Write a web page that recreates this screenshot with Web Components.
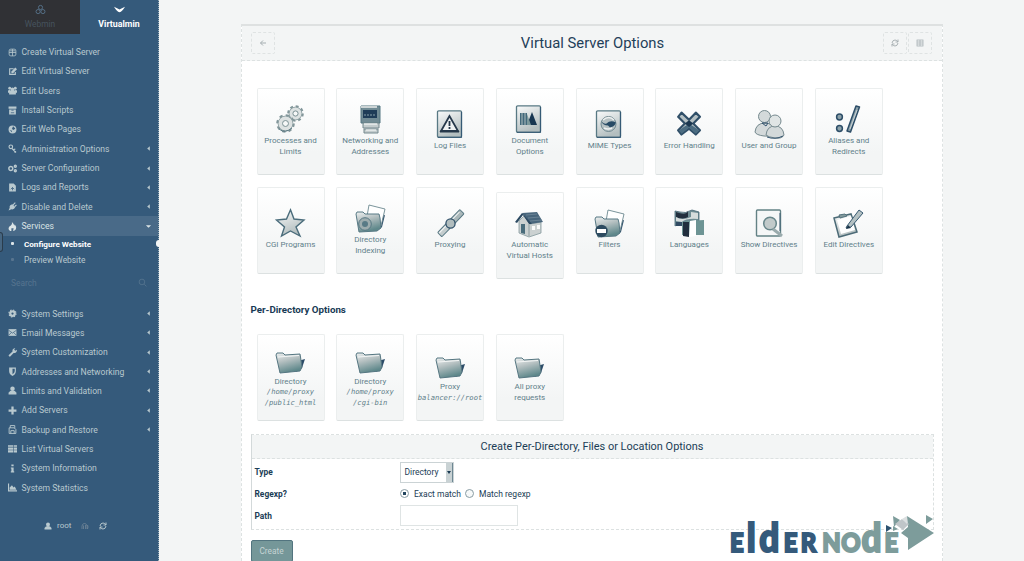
<!DOCTYPE html>
<html lang="en"><head><meta charset="utf-8"><title>Virtual Server Options</title>
<style>html,body{margin:0;height:561px;overflow:hidden;background:#f3f5f5;font-family:Roboto,"Liberation Sans",sans-serif}</style></head>
<body><vm-app></vm-app>
<script>
const glyphs={
webmin:'<g fill="none" stroke="#58748c" stroke-width="1.3"><circle cx="8" cy="5" r="3"/><circle cx="4.5" cy="11" r="3"/><circle cx="11.5" cy="11" r="3"/></g>',
chev:'<path d="M0 4Q5 6 8 8Q11 6 16 4Q12 11 8 12Q4 11 0 4Z"/>',
globe:'<g fill="none" stroke="currentColor" stroke-width="1.4"><rect x="2" y="2" width="12" height="12" rx="3"/><path d="M8 2v12M2 8h12M3 5h10"/></g>',
edit:'<path d="M10 3H3v10h10V9" fill="none" stroke="currentColor" stroke-width="2"/><path d="M6 8l7-7 3 3-7 7H6z"/>',
users:'<circle cx="8" cy="6" r="3.4"/><circle cx="3" cy="4" r="2.5"/><circle cx="13" cy="4" r="2.5"/><path d="M0 12V8q3-2 5 0 3 2 6 0 3-2 5 0v4h-2v3H2v-3z"/>',
box:'<path d="M1 1h14v4H1zM2 6h12v9H2z"/><path d="M6 7.5h4M5 12h6" stroke="#355a7b" stroke-width="1.3"/>',
earth:'<circle cx="8" cy="8" r="7"/><path d="M9 2l4 4-3 3-3-2zM3 9l4 1v3z" fill="#355a7b"/>',
key:'<g fill="none" stroke="currentColor" stroke-width="2"><circle cx="5" cy="5" r="3.2"/><path d="M7 8l6 6M10 10l3-1"/></g><circle cx="13" cy="14" r="1.7"/>',
cogs:'<g fill="none" stroke="currentColor" stroke-width="2.6"><circle cx="5" cy="8" r="3.5"/><circle cx="13" cy="4" r="1.7"/><circle cx="13" cy="12" r="1.7"/></g>',
doc:'<path d="M2 1h8l4 4v10H2z"/><path d="M5 11l3-3 3 3M8 8v5" fill="none" stroke="#355a7b" stroke-width="1.4"/>',
plug:'<path d="M1 15l2-5q-1-5 5-6l5 5q-2 5-7 4z"/><path d="M9 5l4-4M12 8l3-3" stroke="currentColor" stroke-width="2"/>',
fire:'<path d="M7 0q4 4 4 6 1 0 1-2 4 5 2 9-2 3-5 3l1-5H6v5Q1 16 1 11q0-3 4-5 3-2 2-6z"/>',
gear:'<g fill="none" stroke="currentColor"><circle cx="8" cy="8" r="4" stroke-width="4"/><circle cx="8" cy="8" r="6.3" stroke-width="2" stroke-dasharray="2.5 2.45"/></g>',
mail:'<rect y="2" x="1" width="14" height="12"/><path d="M1 4l7 5 7-5M1 13l5-5m9 5l-5-5" fill="none" stroke="#355a7b" stroke-width="1.2"/>',
wrench:'<path d="M2 15l-1-2 7-7q-1-5 5-6l-2 3 2 2 3-2q0 6-6 6l-6 6z"/>',
shield:'<path d="M2 1h12v6q0 6-6 9-6-3-6-9z"/><path d="M8 3h4v4q0 3-4 6z" fill="#355a7b"/>',
person:'<circle cx="8" cy="5" r="4"/><path d="M1 15V12q2-4 7-4t7 4v3z"/>',
plus:'<path d="M6 1h4v5h5v4h-5v5H6v-5H1V6h5z"/>',
save:'<g fill="none" stroke="currentColor" stroke-width="1.6"><path d="M2 5h9l3 3v7H2zM4 5V1h8v5M5 15v-5h6v5"/></g>',
list:'<path d="M0 2h9v3H0zm10 0h6v3h-6zM0 6h9v4H0zm10 0h6v4h-6zM0 11h9v4H0zm10 0h6v4h-6z"/>',
info:'<path d="M6 1h4v3H6zM5 6h5v7h1v2H5v-2h1V8H5z"/>',
stats:'<path d="M0 1h2v12h14v2H0zM3 8l4-4 3 4 2-2 3 6H3z"/>',
search:'<g fill="none" stroke="#5a7892" stroke-width="1.3"><circle cx="7" cy="7" r="5"/><path d="M11 11l4 4"/></g>',
left:'<path d="M11 3L5 8l6 5z"/>',down:'<path d="M2 5h12L8 11z"/>',
refresh:'<path d="M2 8q1-6 6-6 4 0 6 4M14 8q-1 6-6 6-4 0-6-4M14 1v5H9M2 15v-5h5" fill="none" stroke="currentColor" stroke-width="1.9"/>',
back:'<path d="M8 3L3 8l5 5M3 8h11" fill="none" stroke="currentColor" stroke-width="2"/>',
grid:'<g fill="none" stroke="currentColor" stroke-width="1.5"><rect x="2" y="2" width="12" height="12"/><path d="M8 2v12M2 6h12M2 10h12"/></g>',
moon:'<g fill="none" stroke="#8494a1" stroke-width="1.2"><path d="M2 14Q1 3 7 3t5 11M5 14V7m4 7V6m4 8q2-4 0-8"/></g>'};
const defs='<defs><linearGradient id="g" x1="0" y1="0" x2=".4" y2="1"><stop stop-color="#fafbfb"/><stop offset="1" stop-color="#b3bebf"/></linearGradient><linearGradient id="t" x1="0" y1="0" x2=".35" y2="1"><stop stop-color="#eef1f1"/><stop offset=".45" stop-color="#b5c0c1"/><stop offset="1" stop-color="#5f888b"/></linearGradient></defs>';
const paper='<rect x="1.5" y=".8" width="24" height="26.5" rx="1.2" fill="url(#g)" stroke="#587984" stroke-width="1.3"/><path d="M2 27.3h23.5V2" fill="none" stroke="#355a75" stroke-width="1.1"/>';
const folder='<g transform="translate(0 1)"><path d="M22 14l7-2-3 9-6 4z" fill="#2d4d69"/><path d="M0 8l1-2h6l2 2 15-1 .5 3 1.5 10-2 4-20 2z" fill="url(#t)" stroke="#557681" stroke-width="1"/><path d="M2 10l7-.5 14-1" fill="none" stroke="#f4f6f6"/></g>';
const files='<path d="M22 13l7-2-3 12-6 4z" fill="#2d4d69"/><path d="M13 1l16 4-4 17-15-4z" fill="#fff" stroke="#6c8990" stroke-width=".9"/><path d="M0 10l1-2h6l2 2 14 0 1 4 1 10-4 3-18 1z" fill="url(#t)" stroke="#577984" stroke-width="1"/>';
const cog=(x,y,r)=>`<circle cx="${x}" cy="${y}" r="${r}" fill="none" stroke="#82969a" stroke-width="3" stroke-dasharray="${r*.4} ${r*.385}"/><circle cx="${x}" cy="${y}" r="${r-.4}" fill="#dde2e2" stroke="#84989b" stroke-width=".8"/><circle cx="${x}" cy="${y}" r="${r*.38}" fill="#f6f8f8" stroke="#7b9194"/>`;
const pics={
gears:cog(19.5,8.5,6.8)+cog(9.5,18.5,7.8)+'<path d="M3 24q6 5 13-1" fill="none" stroke="#5b7a83"/>',
pc:'<path d="M5 1h19v17H5z" fill="#718b94" stroke="#547681"/><path d="M5 1h16v2H5z" fill="#ccd4d5"/><path d="M7 5h14v8H7z" fill="#1e3c57"/><path d="M8 10h11" stroke="#87a0aa" stroke-dasharray="2 1"/><path d="M7 18h16v5H7zM8 24h14v4H8z" fill="#c3cccd" stroke="#75898e"/><path d="M8 19h13M10 25h10" stroke="#fff"/>',
warn:paper+'<path d="M13.5 6L5 21h17z" fill="#eff2f2" stroke="#26384a" stroke-width="1.8"/><path d="M4 21.5h19" stroke="#26384a" stroke-width="2"/><path d="M13.5 11v5m0 1v2" stroke="#26384a" stroke-width="1.8"/>',
doc:paper+'<path d="M5 8h7v12H5z" fill="#42697b"/><path d="M7 8v12m3-12v12" stroke="#afbebf" stroke-width="1"/><path d="M12 20l5-13 5 13z" fill="#173651"/><path d="M12 9l4 11h-4z" fill="#7b989b"/>',
mime:paper+'<circle cx="13.5" cy="14" r="7.5" fill="#b6c1c3" stroke="#718990"/><path d="M6.5 11.5q3 3 5 2 4-4 9.5-1-1 3-3 4l-3 1-2-2q-5 0-6.500-4z" fill="#284b65"/><path d="M8 10q6-5 11 0M9 18q4 2 8 0" fill="none" stroke="#eef1f1" stroke-width="1.5"/>',
error:'<g transform="translate(2.3 1.8) scale(.84)"><path d="M5 1l9 8.500L22 1l5 5-8 8 8 8-5 5-8-7-9 7-4-5 8-8-8-8z" fill="#b5c0c3" stroke="#304f68" stroke-width="2.6" stroke-linejoin="round"/><path d="M14 14l12 8-4 4-8-7-9 7-3-4z" fill="#4b6c81"/><path d="M9 14l5-4 5 4-5 4z" fill="#1b3750"/></g>',
group:'<g fill="#d3d9da" stroke="#75898e"><path d="M0 22q1-9 10-9t9 9q-2 5-10 4T0 22z"/><circle cx="9.5" cy="6.500" r="6"/><path d="M11 25q1-9 9-9t9 9q-2 4-9 3t-9-3z"/><circle cx="20" cy="11" r="6" fill="#e0e5e5"/></g><path d="M7 13l4 3 2-3zM12 27q8 3 16-1" fill="none" stroke="#345570"/>',
alias:'<g fill="#8da2aa" stroke="#2d4e68" stroke-width="1.5"><circle cx="5.500" cy="12" r="2.9"/><circle cx="5.500" cy="23.500" r="2.9"/><path d="M22 1l3.500 1-9 25-3.500-1z" stroke-linejoin="round"/></g><path d="M23 5l-7 19" stroke="#cad2d4"/>',
star:'<path d="M14.500 .8l3.500 9.200 10 1-8 7 4 9-9.500-5-9 5 3-9-8-7 10-1z" fill="url(#g)" stroke="#4a6c7b" stroke-width="1.4"/>',
index:files+'<circle cx="9" cy="20" r="6.300" fill="#9dacae" stroke="#557783"/><circle cx="9" cy="20" r="3" fill="#587a86"/>',
proxy:'<g transform="rotate(-46 14.500 14.500)"><rect x="-1" y="11.500" width="12" height="6" rx="1" fill="#c3cccd" stroke="#587883"/><rect x="18" y="11.500" width="13" height="6" rx="1" fill="#aab8ba" stroke="#587883"/><path d="M0 13h10M19 13h10" stroke="#f4f6f6"/></g><circle cx="14.500" cy="14.500" r="4.600" fill="#b1bdbe" stroke="#2f5069" stroke-width="1.300"/>',
house:'<path d="M4 12l5-5 6 8 11-2v11l-12 4-10-4z" fill="#cbd1d1" stroke="#83989c" stroke-width=".8"/><path d="M14 15v12" stroke="#8b9c9f"/><path d="M7 4l15-1 6 10-13 2z" fill="#48667c"/><path d="M7 4l-7 9 2 1 6-8 6 9h3z" fill="#2c4a62"/><path d="M11 6l11-1M13 9l12-1M15 12l12-1" stroke="#71899a" stroke-width=".8"/><path d="M6 15h4v10l-4-1z" fill="#496c7b"/><path d="M17 17h3v4h-3zm5-1h3v4h-3z" fill="#fafbfb"/>',
filter:files+'<circle cx="6.500" cy="22" r="6.200" fill="#2d4b60"/><path d="M2 20h9v4H2z" fill="#fff"/>',
lang:'<path d="M0 2l5 1q5 2 12-2l7 2v10H6L0 17z" fill="#6d8b92" stroke="#456574" stroke-width=".8"/><path d="M1 3q10 4 12-1v6Q7 11 1 8z" fill="#222f3e"/><path d="M1 8q6 4 15 0V3l7 1v6q-12-1-16 3L1 12z" fill="#d5dcdc"/><path d="M1 13h6v4H1z" fill="#314b63"/><path d="M7 13l5-1 17-1v15H7z" fill="#6d9494"/><path d="M15 12l6-1v16l-7 1z" fill="#fff"/><path d="M8 13h6v15l-6-1z" fill="#202e3d"/>',
show:'<rect x="1.500" y="1" width="24" height="26" rx="1" fill="#f5f7f7" stroke="#638285" stroke-width="1.400"/><circle cx="15" cy="14.500" r="6.300" fill="#c1caca" stroke="#67868a" stroke-width="1.500"/><path d="M18 20l9 7" stroke="#9aabad" stroke-width="3"/><path d="M25 4v18" stroke="#416076"/>',
write:'<path d="M0 9l17-4 6 18-18 5z" fill="url(#g)" stroke="#4c6b77" stroke-width="1.500"/><path d="M3 11l14-4 4 14-14 4z" fill="#fff"/><path d="M5 6l6-1 2 2-7 2z" fill="#839a9d" stroke="#53727d"/><path d="M13 17L25 1l4 3-12 14-5 1z" fill="#b4c1c3" stroke="#365970" stroke-width="1"/><path d="M12 20l2-4 3 3z" fill="#1b354a"/>',
folder};
function make(name,css,html){customElements.define(name,class extends HTMLElement{constructor(){super();const r=this.attachShadow({mode:'open'});const t=document.createElement('template');t.innerHTML='<style>'+css+'</style>'+(typeof html==='function'?html(this):html);r.append(t.content.cloneNode(true));}})}
make('ui-icon',':host{display:block;width:9px;height:9px;flex:none}svg{display:block;width:100%;height:100%}',e=>`<svg viewBox="0 0 16 16" fill="currentColor">${glyphs[e.getAttribute('name')]||''}</svg>`);
make('nav-item',`:host{display:flex;align-items:center;height:19.35px;padding:0 6px 0 8px;color:#b9c9cf;font-size:8.6px;white-space:nowrap}
:host([active]){background:#496a88;color:#dbe4e6}.l{margin-left:4.5px;flex:1}.a{width:7px;height:7px}`,
e=>`<ui-icon name="${e.getAttribute('icon')}"></ui-icon><span class="l"><slot></slot></span>${e.hasAttribute('arrow')?`<ui-icon class="a" name="${e.getAttribute('arrow')||'left'}"></ui-icon>`:''}`);
const nav=a=>a.map(([i,t,r])=>`<nav-item icon="${i}" ${r?`arrow="${r}"`:''} ${t=='Services'?'active':''}>${t}</nav-item>`).join('');
make('side-bar',`:host{display:block;position:relative;box-sizing:border-box;width:159px;height:561px;background:#355a7b;border-right:1px dotted #9cafb9;color:#b9c9cf}
.tabs{display:grid;grid-template-columns:80px 1fr;height:34px;margin-bottom:8.4px}.tab{display:flex;flex-direction:column;align-items:center;font-size:8.8px;line-height:12px;padding-top:4px;height:30px;color:#fff;font-weight:700}.tab ui-icon{width:11px;height:11px;margin-bottom:3px}.tab:first-child{background:#303135;color:#46535e;font-weight:400;font-size:8.4px}
.sub{display:flex;align-items:center;height:16px;padding-left:11px;font-size:8.4px;gap:10px}.sub i{width:3px;height:3px;border-radius:1px;background:#dbe4e7}.sub.on{color:#fff;font-weight:700;font-size:8.1px}.sub:not(.on) i{background:#58758f}
.search{display:flex;justify-content:space-between;align-items:center;padding:0 11px;height:30px;font-size:8.4px;color:#56748f}.group{margin-top:6px}
.foot{display:flex;align-items:center;gap:5px;padding-left:44px;height:12px;margin-top:22.6px;font-size:8px}.foot ui-icon{width:8px;height:8px}.foot .m{width:12px;margin:0 3px}
.notch{position:absolute;right:-1px;top:240px;width:3px;height:7px;border-radius:4px 0 0 4px;background:#f3f5f5}.edge{position:absolute;left:0;top:232px;width:3px;height:20px;border:1px solid #2a3c4c;border-left:0;border-radius:0 4px 4px 0;background:#466580;box-sizing:border-box}`,
`<div class="tabs"><div class="tab"><ui-icon name="webmin"></ui-icon>Webmin</div><div class="tab"><ui-icon name="chev"></ui-icon>Virtualmin</div></div>
${nav([['globe','Create Virtual Server'],['edit','Edit Virtual Server'],['users','Edit Users'],['box','Install Scripts'],['earth','Edit Web Pages'],['key','Administration Options','left'],['cogs','Server Configuration','left'],['doc','Logs and Reports','left'],['plug','Disable and Delete','left'],['fire','Services','down']])}
<div class="sub on"><i></i>Configure Website</div><div class="sub"><i></i>Preview Website</div><div class="search">Search<ui-icon name="search"></ui-icon></div>
<div class="group">${nav([['gear','System Settings','left'],['mail','Email Messages','left'],['wrench','System Customization','left'],['shield','Addresses and Networking','left'],['person','Limits and Validation','left'],['plus','Add Servers','left'],['save','Backup and Restore','left'],['list','List Virtual Servers'],['info','System Information'],['stats','System Statistics']])}</div>
<div class="foot"><ui-icon name="person"></ui-icon>root<ui-icon class="m" name="moon"></ui-icon><ui-icon name="refresh"></ui-icon></div><div class="notch"></div><div class="edge"></div>`);
make('option-card',`:host{box-sizing:border-box;display:flex;flex-direction:column;align-items:center;justify-content:center;height:87px;padding-bottom:1.5px;border:1px solid #ebeeee;border-bottom-color:#dce1e1;border-radius:2px;background:linear-gradient(#fff,#f3f5f5 75%);color:#5f7f8a;font-size:8px;line-height:10.3px;text-align:center;white-space:nowrap}
svg{width:29px;height:28px;display:block;margin-bottom:3.5px;overflow:visible}::slotted(i){font:italic 7.15px/10.3px "DejaVu Sans Mono",monospace}`,e=>`<svg viewBox="0 0 29 28">${defs}${pics[e.getAttribute('pic')]}</svg><div><slot></slot></div>`);
const cards=a=>a.map(([p,t])=>`<option-card pic="${p}" ${p=='house'?'class="low"':''}>${t}</option-card>`).join('');
make('options-form',`:host{display:block;box-sizing:border-box;width:683px;height:96px;border:1px dashed #dce1e1;border-left:1px solid #d3d9da;color:#1b3d56;font-size:8.5px}
.h{height:23px;display:flex;align-items:center;justify-content:center;background:#f3f5f5;border-bottom:1px dashed #dce1e1;font-size:10.95px}.r{display:grid;grid-template-columns:145.5px 1fr;align-items:center;padding-left:3px}.type{height:26px}.regexp{height:17px}.path{height:27px}b{font-size:8.4px}
.s{display:flex;align-items:center;box-sizing:border-box;width:54px;height:21px;border:1px solid #cbd3d5;padding-left:3.5px}.s i{margin-left:auto;width:6px;height:19px;background:#c9d2d4;border-right:1px solid #6d8793;display:flex;align-items:center;justify-content:center}.s i:before{content:"";border:2px solid transparent;border-top:3px solid #193951;border-bottom:0}
.o{display:flex;align-items:center}.o u{box-sizing:border-box;width:9px;height:9px;border:1px solid #899ca4;border-radius:50%;margin-right:5px;background:#f7f9f9}.o u.c{background:radial-gradient(#24465f 1.6px,#fff 2px)}.o span{margin-right:4px}.p{box-sizing:border-box;width:118px;height:21px;border:1px solid #dfe4e4;background:#fff}`,
`<div class="h">Create Per-Directory, Files or Location Options</div><div class="r type"><b>Type</b><div class="s">Directory<i></i></div></div><div class="r regexp"><b>Regexp?</b><div class="o"><u class="c"></u><span>Exact match</span><u></u><span>Match regexp</span></div></div><div class="r path"><b>Path</b><div class="p"></div></div>`);
make('elder-logo',`:host{display:block;width:210px;height:61px}svg{display:block;overflow:visible}`,
`<svg width="210" height="61" viewBox="728 500 210 61"><g transform="translate(731 551.5) scale(.9 1)" font-family="Lato,sans-serif" font-weight="900" stroke-width="2" fill="#355a7b" stroke="#355a7b"><text font-size="26.5"><tspan x="-1">E</tspan><tspan x="17.500" font-size="39">l</tspan><tspan x="31.500" font-size="39">d</tspan><tspan x="58.500" font-size="26.5">E</tspan><tspan x="77.500">R</tspan><tspan x="101.500" fill="#7d9c9b" stroke="#7d9c9b">N</tspan><tspan x="122.500" fill="#7d9c9b" stroke="#7d9c9b">O</tspan><tspan x="145" font-size="39" fill="#7d9c9b" stroke="#7d9c9b">d</tspan><tspan x="170.500" fill="#7d9c9b" stroke="#7d9c9b">E</tspan></text></g><path d="M907 516l27 17-26 17v-12l-7-5 7-6z" fill="#7d9c9b"/><path d="M893 516l7 4-6 7zM893 526l5 3-5 2zM926 515l7 4-7 5z" fill="#7d9c9b"/><path d="M886 525l6 3-6 4z" fill="#2d5270"/><path d="M895 524l7-5 7 5-6 6z" fill="#bfc5c8"/><path d="M902 519l5-3v8z" fill="#dce0e1"/></svg>`);
make('options-panel',`:host{display:block;position:relative;box-sizing:border-box;width:702px;height:537px;background:#fff;border:1px dashed #dde2e2;border-top:2px solid #dee1e1;border-bottom:0}
header{display:flex;align-items:center;box-sizing:border-box;height:35px;background:#f3f5f5;border-bottom:1px dashed #dde2e2;padding:0 10px 0 9px;color:#1f4059}header span{flex:1;text-align:center;font-size:14.8px}.bt{display:flex;align-items:center;justify-content:center;box-sizing:border-box;width:24px;height:22px;border:1px dashed #dfe3e3;color:#a5aeb1;border-radius:2px}.back{margin-right:27px}.bt+.bt{margin-left:1px}.bt ui-icon{width:8px;height:8px}
.g{display:grid;grid-template-columns:repeat(8,68px);column-gap:11.75px;row-gap:12px;padding-left:14.5px;align-items:start}.one{margin-top:27px}.low{margin-top:5px}h3{margin:25px 0 18px 8.5px;font-size:9.75px;line-height:12px;color:#173a54}options-form{margin:13px 0 10px 8.5px}
button{display:block;margin-left:8.5px;width:42px;height:22px;box-sizing:border-box;background:#759799;border:1.5px solid #52747f;border-radius:2px;color:#c5d4d4;font:8.3px Roboto,sans-serif;padding:0}elder-logo{position:absolute;left:485.5px;top:474px}`,
`<header><div class="bt back"><ui-icon name="back"></ui-icon></div><span>Virtual Server Options</span><div class="bt"><ui-icon name="refresh"></ui-icon></div><div class="bt"><ui-icon name="grid"></ui-icon></div></header>
<div class="g one">${cards([['gears','Processes and<br>Limits'],['pc','Networking and<br>Addresses'],['warn','Log Files'],['doc','Document<br>Options'],['mime','MIME Types'],['error','Error Handling'],['group','User and Group'],['alias','Aliases and<br>Redirects'],['star','CGI Programs'],['index','Directory<br>Indexing'],['proxy','Proxying'],['house','Automatic<br>Virtual Hosts'],['filter','Filters'],['lang','Languages'],['show','Show Directives'],['write','Edit Directives']])}</div>
<h3>Per-Directory Options</h3><div class="g">${cards([['folder','Directory<br><i>/home/proxy</i><br><i>/public_html</i>'],['folder','Directory<br><i>/home/proxy</i><br><i>/cgi-bin</i>'],['folder','Proxy<br><i>balancer://root</i>'],['folder','All proxy<br>requests']])}</div><options-form></options-form><button>Create</button><elder-logo></elder-logo>`);
make('vm-app',`:host{display:flex;height:561px;overflow:hidden}side-bar{flex:none}main{padding:24px 0 0 82px}`,`<side-bar></side-bar><main><options-panel></options-panel></main>`);
</script></body></html>
